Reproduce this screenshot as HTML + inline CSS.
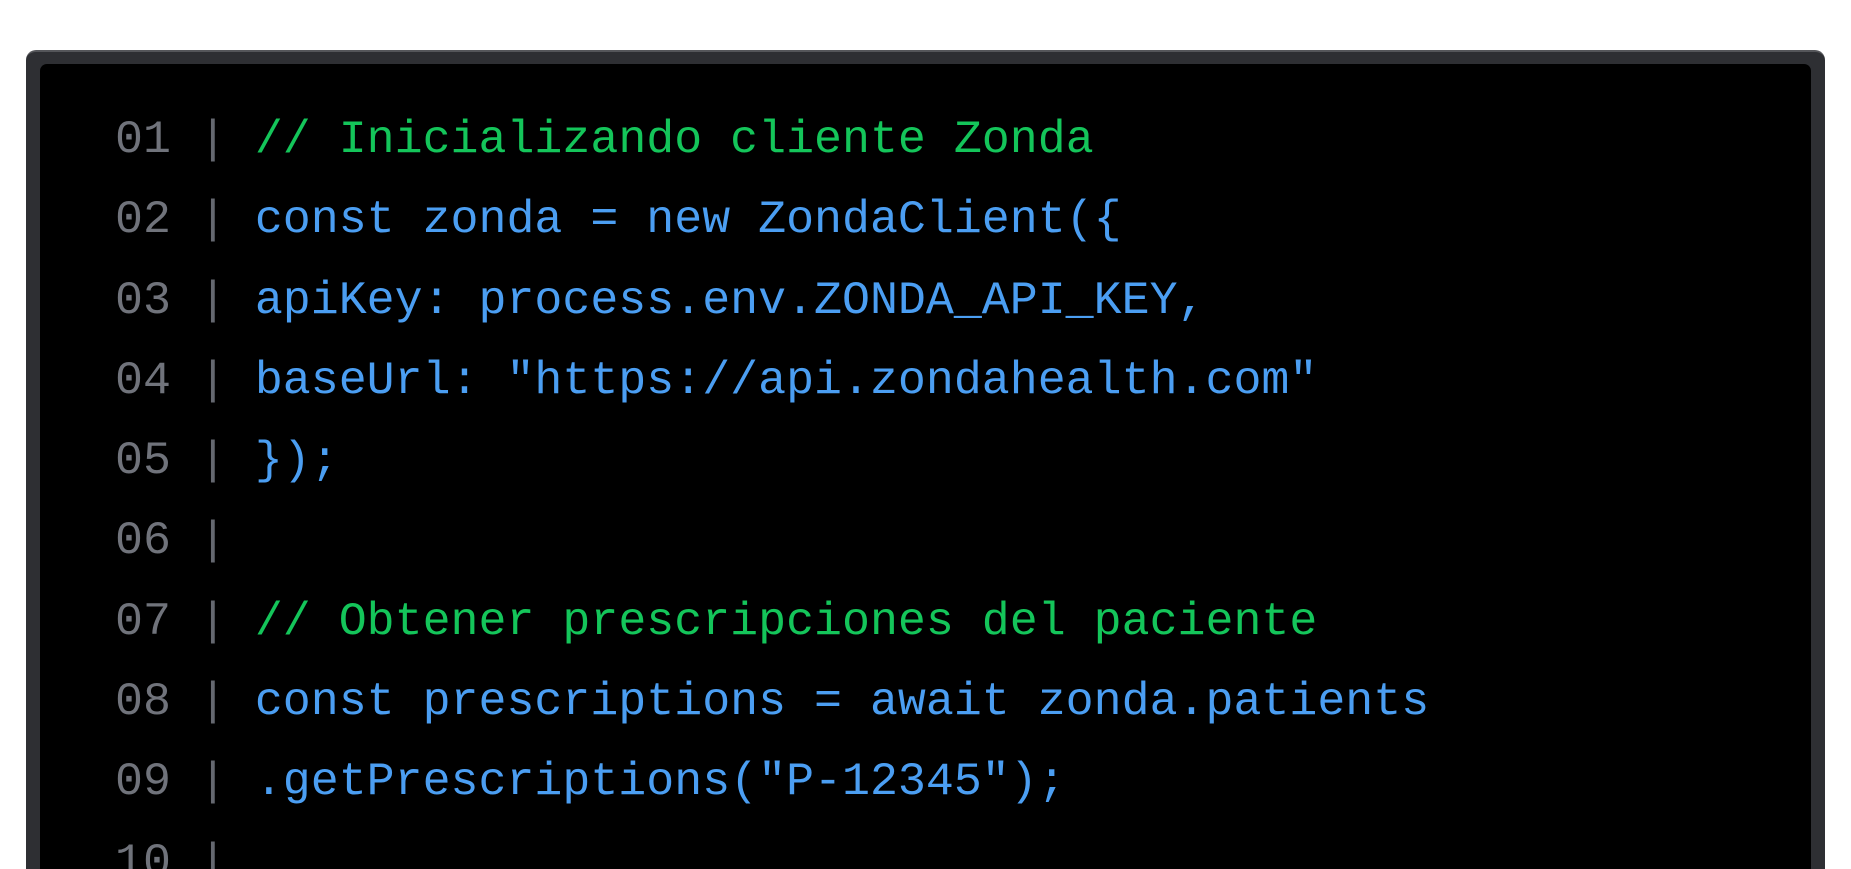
<!DOCTYPE html>
<html><head><meta charset="utf-8"><style>
html,body{margin:0;padding:0;background:#fff;width:1851px;height:869px;overflow:hidden;position:relative}
.frame{position:absolute;left:26px;top:50px;width:1799px;height:819px;background:#2e2f33;border-radius:10px 10px 0 0;border-top:2px solid #55565a;box-sizing:border-box;overflow:hidden}
.inner{position:absolute;left:14px;top:12px;right:14px;bottom:0;background:#000;border-radius:7px 7px 0 0;overflow:hidden}
pre{position:absolute;left:75px;top:36px;margin:0;font-family:"Liberation Mono",monospace;font-size:46.6px;line-height:80.3px;color:#4b9ef2}
.n{color:#70737b}.p{color:#656870}.c{color:#14c55a}
</style></head><body>
<div class="frame"><div class="inner">
<pre><span class="n">01</span> <span class="p">|</span> <span class="c">// Inicializando cliente Zonda</span>
<span class="n">02</span> <span class="p">|</span> const zonda = new ZondaClient({
<span class="n">03</span> <span class="p">|</span> apiKey: process.env.ZONDA_API_KEY,
<span class="n">04</span> <span class="p">|</span> baseUrl: "https://api.zondahealth.com"
<span class="n">05</span> <span class="p">|</span> });
<span class="n">06</span> <span class="p">|</span>
<span class="n">07</span> <span class="p">|</span> <span class="c">// Obtener prescripciones del paciente</span>
<span class="n">08</span> <span class="p">|</span> const prescriptions = await zonda.patients
<span class="n">09</span> <span class="p">|</span> .getPrescriptions("P-12345");
<span class="n">10</span> <span class="p">|</span></pre>
</div></div>
</body></html>
